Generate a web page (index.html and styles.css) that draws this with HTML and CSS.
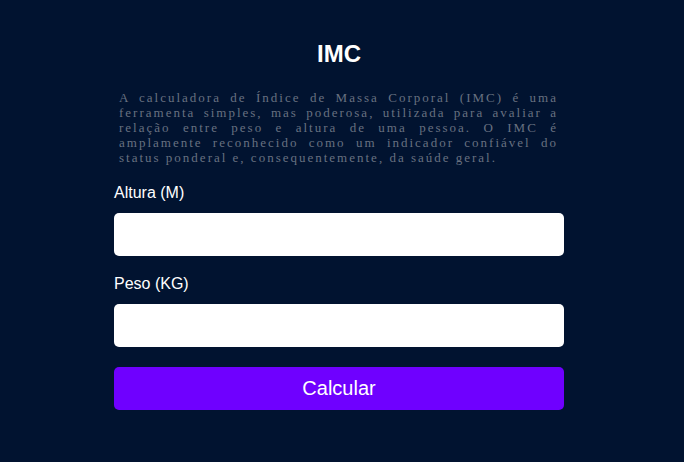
FILE: index.html
```html
<!DOCTYPE html>
<html lang="pt-BR">
<head>
<meta charset="utf-8">
<title>IMC</title>
<link rel="stylesheet" href="styles.css">
</head>
<body>
<main class="card">
  <h1 class="title">IMC</h1>
  <p class="intro">A calculadora de Índice de Massa Corporal (IMC) é uma ferramenta simples, mas poderosa, utilizada para avaliar a relação entre peso e altura de uma pessoa. O IMC é amplamente reconhecido como um indicador confiável do status ponderal e, consequentemente, da saúde geral.</p>
  <form class="form">
    <label class="label" for="altura">Altura (M)</label>
    <input class="field" id="altura" type="text">
    <label class="label second" for="peso">Peso (KG)</label>
    <input class="field" id="peso" type="text">
    <button class="btn" type="button">Calcular</button>
  </form>
</main>
</body>
</html>
```
FILE: styles.css
```css
html, body {
  margin: 0;
  padding: 0;
  background: #011330;
  height: 100%;
}
body {
  font-family: "Liberation Sans", Arial, sans-serif;
}
.card {
  width: 450px;
  margin-left: 114px;
  padding-top: 40px;
}
.title {
  margin: 0;
  font-size: 24px;
  font-weight: bold;
  color: #ffffff;
  text-align: center;
  line-height: 28px;
}
.intro {
  margin: 22px 0 0 0;
  padding: 0 6px 0 5px;
  font-family: "Liberation Serif", "Times New Roman", serif;
  font-size: 13px;
  line-height: 15px;
  letter-spacing: 2px;
  color: #687180;
  text-align: justify;
}
.form {
  display: flex;
  flex-direction: column;
  margin-top: 19px;
}
.label {
  color: #ffffff;
  font-size: 16px;
  line-height: 18px;
  margin-bottom: 11px;
}
.label.second {
  margin-top: 19px;
}
.field {
  box-sizing: border-box;
  height: 43px;
  width: 450px;
  border: none;
  border-radius: 5px;
  background: #ffffff;
  margin: 0;
  padding: 0 10px;
}
.btn {
  margin-top: 20px;
  height: 43px;
  width: 450px;
  border: none;
  border-radius: 5px;
  background: #6f00ff;
  color: #ffffff;
  font-family: "Liberation Sans", Arial, sans-serif;
  font-size: 20px;
  padding: 0;
}
```
